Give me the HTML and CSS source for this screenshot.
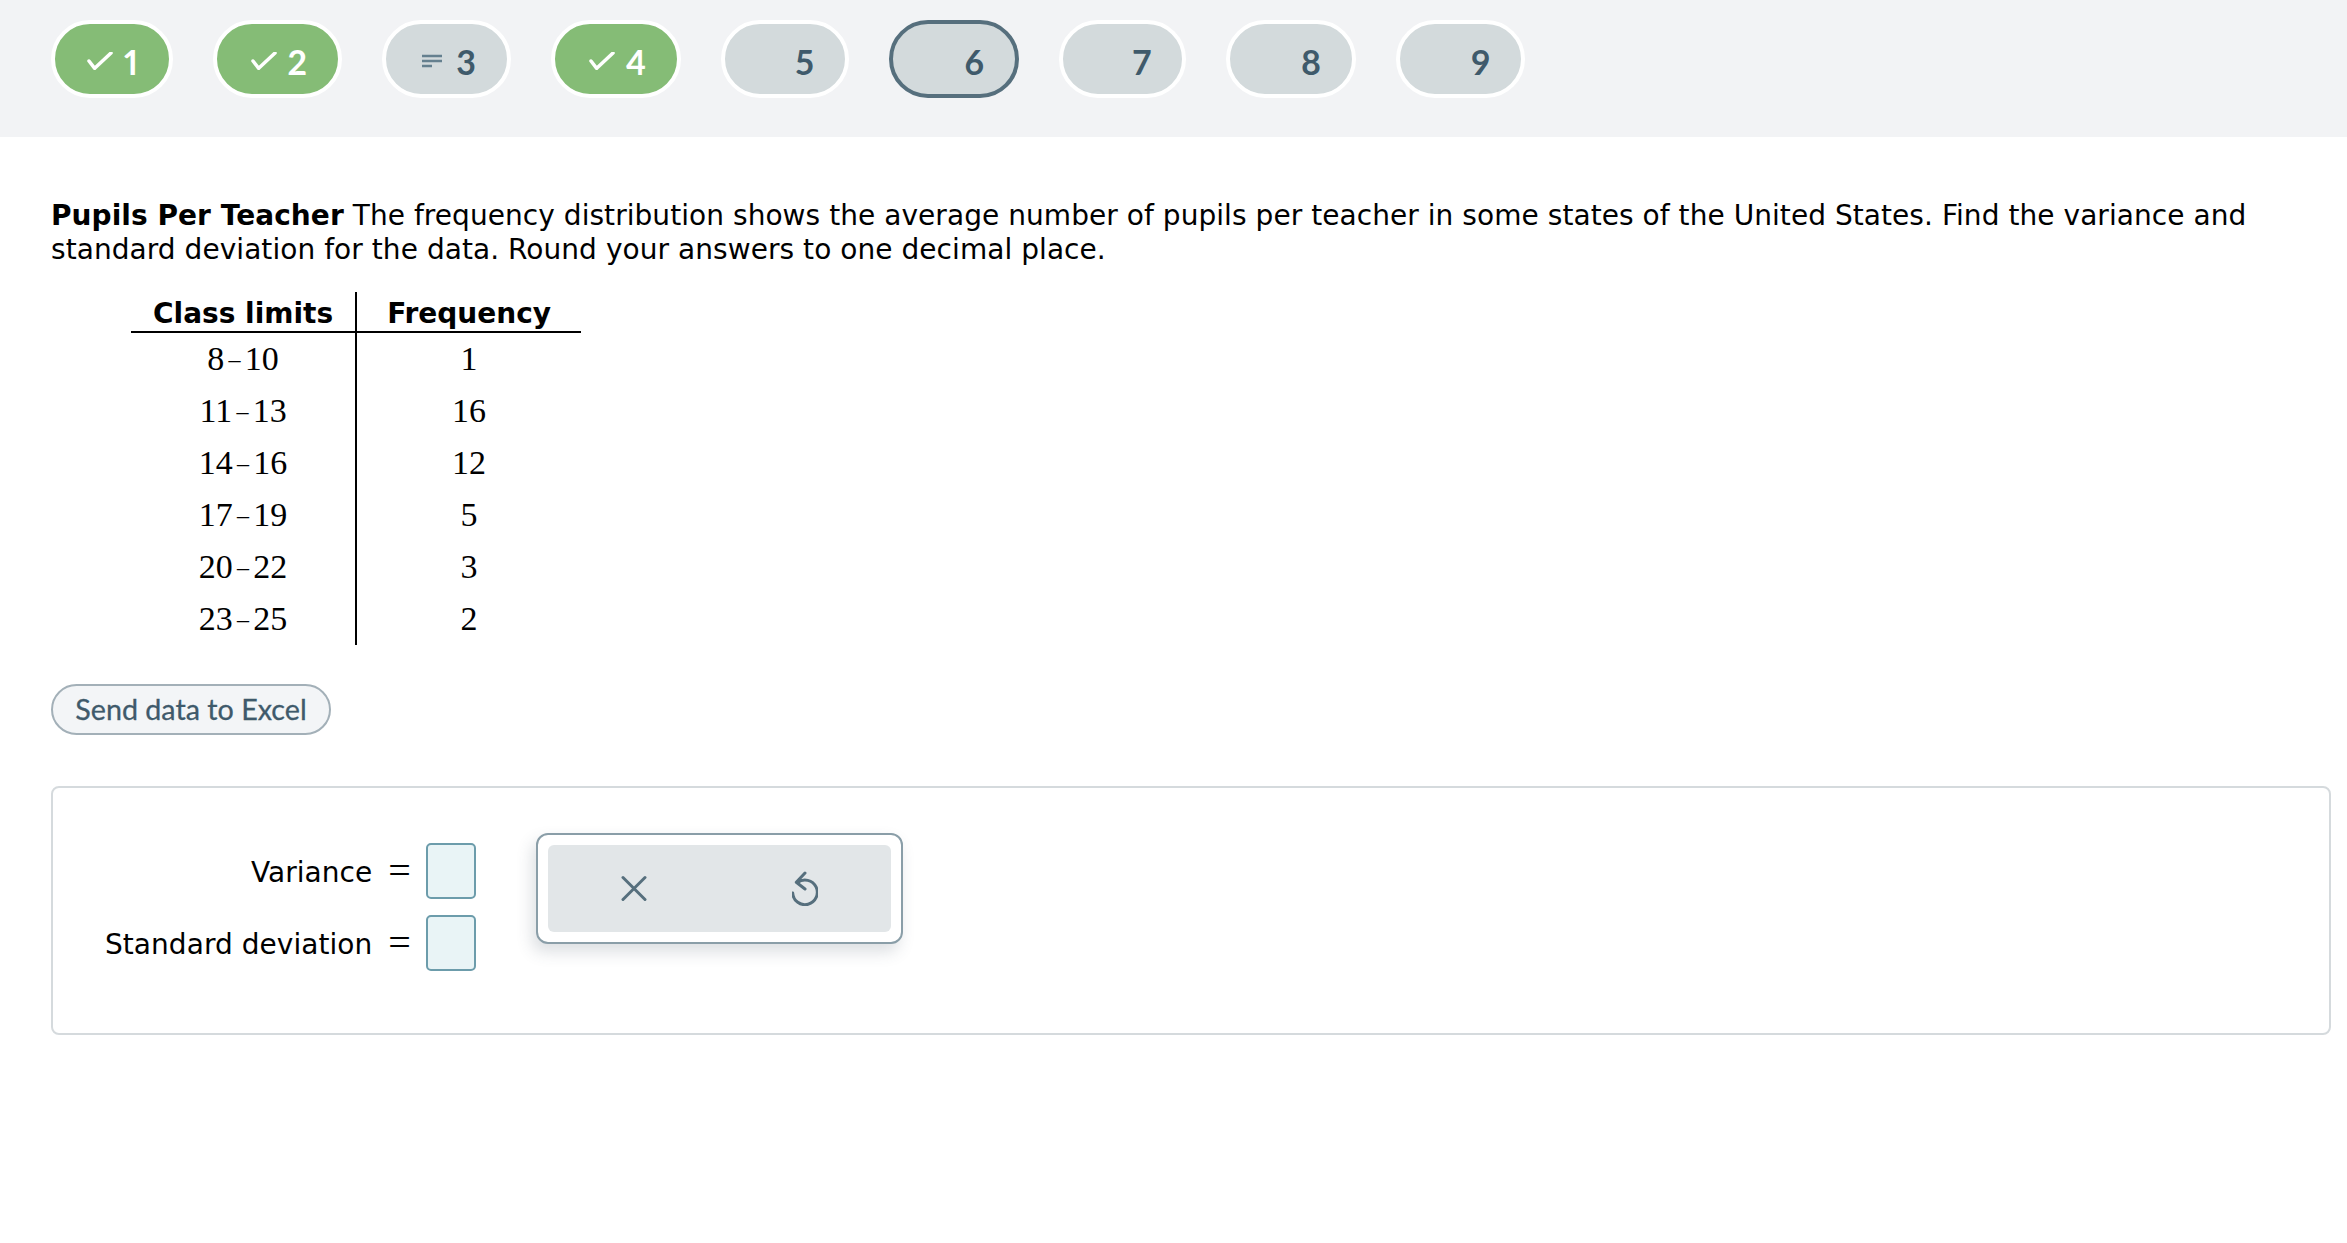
FILE: index.html
```html
<!DOCTYPE html>
<html lang="en">
<head>
<meta charset="UTF-8">
<title>Pupils Per Teacher</title>
<link rel="stylesheet" href="styles.css">
</head>
<body>
<!-- Question navigator -->
<nav class="topbar">
  <div class="pill done"><svg class="check" viewBox="0 0 26 18"><path d="M2 9l5.700 7.300L24 1"/></svg><span>1</span></div>
  <div class="pill done"><svg class="check" viewBox="0 0 26 18"><path d="M2 9l5.700 7.300L24 1"/></svg><span>2</span></div>
  <div class="pill"><svg class="lines" viewBox="0 0 23 14"><path d="M0 2h20M0 7h20M0 12h10"/></svg><span>3</span></div>
  <div class="pill done"><svg class="check" viewBox="0 0 26 18"><path d="M2 9l5.700 7.300L24 1"/></svg><span>4</span></div>
  <div class="pill"><span>5</span></div>
  <div class="pill current"><span>6</span></div>
  <div class="pill"><span>7</span></div>
  <div class="pill"><span>8</span></div>
  <div class="pill"><span>9</span></div>
</nav>

<main class="content">
  <p class="question"><b>Pupils Per Teacher</b> The frequency distribution shows the average number of pupils per teacher in some states of the United States. Find the variance and standard deviation for the data. Round your answers to one decimal place.</p>

  <table class="freq">
    <tr><th>Class limits</th><th>Frequency</th></tr>
    <tr><td>8<span class="dash">&ndash;</span>10</td><td>1</td></tr>
    <tr><td>11<span class="dash">&ndash;</span>13</td><td>16</td></tr>
    <tr><td>14<span class="dash">&ndash;</span>16</td><td>12</td></tr>
    <tr><td>17<span class="dash">&ndash;</span>19</td><td>5</td></tr>
    <tr><td>20<span class="dash">&ndash;</span>22</td><td>3</td></tr>
    <tr><td>23<span class="dash">&ndash;</span>25</td><td>2</td></tr>
  </table>

  <button class="excel">Send data to Excel</button>

  <section class="answer">
    <div class="fields">
      <span class="label">Variance</span><span class="eq">=</span><span class="box"></span>
      <span class="label">Standard deviation</span><span class="eq">=</span><span class="box"></span>
    </div>
    <div class="keypad">
      <div class="keys">
        <svg class="key" viewBox="0 0 26 35"><path d="M2 6.500l22 22M24 6.500l-22 22"/></svg>
        <svg class="key" viewBox="0 0 26 35"><path d="M13 2L4.300 11.300 13 18M5.500 11.550A12.300 12.300 0 1 1 .7 22"/></svg>
      </div>
    </div>
  </section>
</main>
</body>
</html>
```

FILE: styles.css
```css
body {
  margin: 0;
  background: #fff;
  font-family: "DejaVu Sans", sans-serif;
  color: #000;
}
.topbar {
  display: flex;
  gap: 40px;
  height: 137px;
  box-sizing: border-box;
  padding: 20px 0 0 51px;
  background: #f2f3f5;
}
.pill {
  width: 129px;
  height: 78px;
  box-sizing: border-box;
  border: 4px solid #fff;
  border-radius: 39px;
  background: #d3dadc;
  color: #3f5a6b;
  display: flex;
  align-items: center;
  justify-content: flex-end;
  gap: 11px;
  padding: 4px 31px 0 0;
  font-family: Lato, sans-serif;
  font-size: 34px;
  font-weight: 700;
  font-variant-numeric: proportional-nums;
}
.pill:nth-child(1) { width: 122px; }
.pill:nth-child(4), .pill:nth-child(6), .pill:nth-child(8) { width: 130px; }
.pill:nth-child(5) { width: 128px; }
.pill:nth-child(7) { width: 127px; }
.pill.done {
  background: #85bc76;
  color: #fff;
}
.pill.current {
  border-color: #566f7d;
}
.check {
  width: 26px;
  height: 18px;
  fill: none;
  stroke: #fff;
  stroke-width: 3.5;
  stroke-linecap: round;
  stroke-linejoin: round;
}
.lines {
  width: 23px;
  height: 14px;
  fill: none;
  stroke: #65808f;
  stroke-width: 2.5;
}
.content {
  padding: 62px 16px 0 51px;
}
.question {
  margin: 0;
  font-size: 28px;
  line-height: 34px;
  letter-spacing: .055px;
}
.freq {
  border-collapse: collapse;
  margin: 25px 0 0 80px;
}
.freq th {
  font-size: 28px;
  line-height: 33px;
  padding: 5px 22px 1px;
  border-bottom: 2px solid #000;
}
.freq th + th {
  padding: 5px 30px 1px;
}
.freq td {
  font-family: "Liberation Serif", serif;
  font-size: 34px;
  height: 52px;
  text-align: center;
  padding: 0;
}
.freq th:first-child, .freq td:first-child {
  border-right: 2px solid #000;
}
.dash {
  margin: 0 4.300px;
  font-size: 24px;
  vertical-align: 3px;
}
.excel {
  display: block;
  width: 280px;
  height: 51px;
  margin-top: 39px;
  padding: 0 0 2px;
  border: 2px solid #a3b0b8;
  border-radius: 26px;
  background: #f3f5f7;
  color: #3f5a6b;
  font-family: Lato, sans-serif;
  font-size: 28.700px;
  -webkit-text-stroke: .3px #3f5a6b;
}
.answer {
  display: flex;
  margin-top: 51px;
  height: 249px;
  box-sizing: border-box;
  padding: 55px 0 0 52px;
  border: 2px solid #d5dadd;
  border-radius: 8px;
}
.fields {
  display: grid;
  grid-template-columns: auto auto auto;
  grid-auto-rows: 56px;
  row-gap: 16px;
  align-items: center;
  font-size: 28px;
  letter-spacing: .05px;
}
.label {
  padding-top: 2px;
  text-align: right;
}
.eq {
  margin: 0 15px 0 16px;
  font-family: "Liberation Serif", serif;
  font-size: 40px;
  line-height: 40px;
}
.box {
  width: 50px;
  height: 56px;
  box-sizing: border-box;
  border: 2px solid #6c9cab;
  border-radius: 5px;
  background: #e9f4f6;
}
.keypad {
  width: 367px;
  height: 111px;
  box-sizing: border-box;
  margin: -10px 0 0 60px;
  padding: 10px;
  border: 2px solid #8a9ea8;
  border-radius: 12px;
  background: #fff;
  box-shadow: -4px 8px 16px rgba(60, 80, 95, .18);
}
.keys {
  height: 100%;
  display: flex;
  align-items: center;
  justify-content: space-around;
  background: #e2e6e8;
  border-radius: 6px;
}
.key {
  width: 26px;
  height: 35px;
  fill: none;
  stroke: #566f7d;
  stroke-width: 3;
  stroke-linecap: round;
  stroke-linejoin: round;
}
```
